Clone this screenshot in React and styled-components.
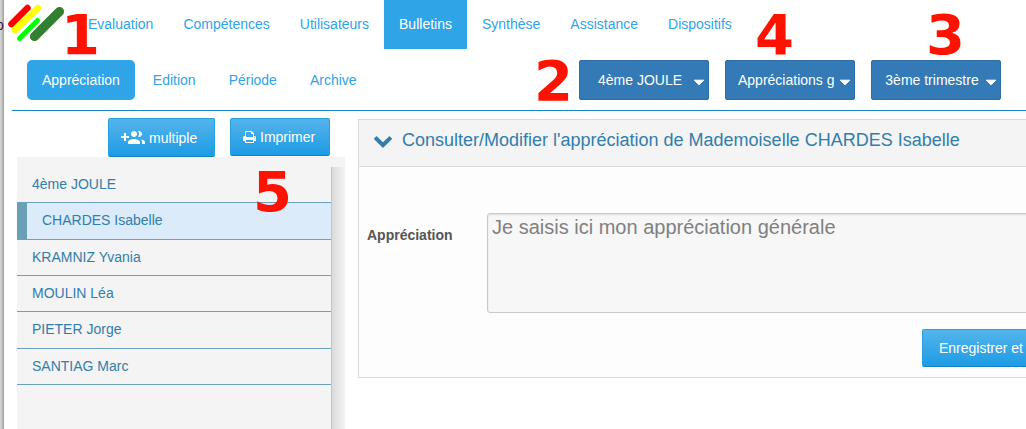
import React from "react";
import styled, { createGlobalStyle } from "styled-components";

const GlobalStyle = createGlobalStyle`
  *, *::before, *::after { box-sizing: border-box; }
  html { height: 100%; }
  body {
    height: 100%;
    margin: 0;
    overflow: hidden;
    background: #fff;
    color: #555;
    font: 14px/20px "Liberation Sans", Arial, sans-serif;
  }
  #root { height: 100%; }
  ul { list-style: none; margin: 0; padding: 0; }
  a { text-decoration: none; }
  button, select, textarea { font: inherit; }
`;

const Shell = styled.div`
  position: relative;
  display: flex;
  min-height: 100%;
  overflow: hidden;
`;

const WindowEdge = styled.div`
  flex: 0 0 4px;
  padding-top: 15px;
  overflow: hidden;
  color: #402030;
  text-indent: -4px;
  background: linear-gradient(to right, #d6d6d6, #c4c4c4 50%, #999);
`;

const Page = styled.div`
  flex: 1;
  min-width: 0;
  display: flex;
  flex-direction: column;
`;

const MainNav = styled.nav`
  display: flex;
  height: 49px;
  padding-left: 4px;
`;

const Logo = styled.svg`
  flex: none;
  width: 65px;
  height: 49px;
  stroke-linecap: round;
`;

const NavLink = styled.a`
  display: flex;
  align-items: center;
  padding: 0 15px;
  white-space: nowrap;
  color: ${(p) => (p.$active ? "#fff" : "#2fa4e7")};
  background: ${(p) => (p.$active ? "#2fa4e7" : "transparent")};
`;

const MainLink = styled(NavLink)`
  padding-bottom: 2px;
`;

const SubBar = styled.div`
  display: flex;
  justify-content: space-between;
  margin: 11px 0 8px 8px;
  padding: 0 25px 10px 15px;
  border-bottom: 1px solid #1d86c8;
`;

const SubNav = styled.nav`
  display: flex;
  gap: 3px;
  height: 40px;
`;

const SubLink = styled(NavLink)`
  border-radius: 5px;
`;

const Filters = styled.div`
  display: flex;
  gap: 16px;
`;

const FilterBox = styled.label`
  display: grid;
  align-items: center;
  width: 130px;
  height: 40px;

  > * { grid-area: 1 / 1; }
`;

const FilterSelect = styled.select`
  width: 100%;
  height: 100%;
  padding: 0 20px 0 12px;
  appearance: none;
  border: 1px solid #2e6da4;
  border-radius: 2px;
  background: #337ab7;
  color: #fff;
  text-align: center;
`;

const Caret = styled.svg`
  justify-self: end;
  width: 12px;
  height: 7px;
  margin: 4px 4px 0 0;
  fill: #fff;
  stroke: #fff;
  stroke-linejoin: round;
  pointer-events: none;
`;

const Columns = styled.div`
  flex: 1;
  display: flex;
  gap: 13px;
  padding-left: 13px;
`;

const Sidebar = styled.aside`
  flex: 0 0 328px;
  display: flex;
  flex-direction: column;
`;

const Actions = styled.div`
  display: flex;
  justify-content: flex-end;
  align-items: flex-start;
  gap: 15px;
  padding: 0 15px 0 0;
  margin-top: -1px;
`;

const Button = styled.button`
  display: flex;
  align-items: center;
  gap: 4px;
  height: ${(p) => (p.$tall ? 39 : 38)}px;
  min-width: ${(p) => (p.$tall ? 107 : 100)}px;
  padding: 0 ${(p) => (p.$wide ? 16 : 12)}px;
  border: 1px solid #2a9fe0;
  border-bottom-color: #1681c0;
  border-radius: 2px;
  background: linear-gradient(to bottom, #54b4eb, #1d9ce5);
  color: #fff;
  white-space: nowrap;
`;

const GroupIcon = styled.svg`
  width: 24px;
  height: 24px;
  fill: #fff;
`;

const PrintIcon = styled.svg`
  width: 13px;
  height: 12px;
  fill: #fff;
`;

const ListPane = styled.div`
  flex: 1;
  display: flex;
  padding-top: 10px;
  background: #f4f4f4;
`;

const List = styled.ul`
  flex: 1;
  display: grid;
  grid-auto-rows: 1fr;
  align-self: flex-start;
  min-height: 218px;
`;

const ListItem = styled.li`
  display: grid;
  border-bottom: 1px solid #6aa3bb;
`;

const ListLink = styled.a`
  display: flex;
  align-items: center;
  padding: 0 15px 1px;
  color: #317eac;
  border-left: ${(p) => (p.$selected ? "10px solid #6aa0b6" : "0")};
  background: ${(p) => (p.$selected ? "#dcebf9" : "transparent")};
`;

const ScrollShade = styled.div`
  width: 14px;
  border-left: 1px solid #c4c4c4;
  background: linear-gradient(to right, #dadada, #f4f4f4);
`;

const Panel = styled.section`
  flex: 1;
  align-self: flex-start;
  min-width: 0;
  margin-right: -80px;
  border: 1px solid #dadada;
  background: #fdfdfd;
`;

const PanelHeader = styled.header`
  display: flex;
  align-items: center;
  gap: 10px;
  padding: 10px 15px 16px;
  border-bottom: 1px solid #dadada;
  background: #f4f4f4;
`;

const Chevron = styled.svg`
  width: 18px;
  height: 12px;
  margin-top: 4px;
  fill: #317eac;
`;

const PanelTitle = styled.h2`
  margin: 0;
  font-size: 18px;
  line-height: 20px;
  font-weight: 400;
  white-space: nowrap;
  color: #317eac;
`;

const Form = styled.form`
  padding: 46px 0 10px 8px;
`;

const Field = styled.div`
  display: flex;
`;

const FieldLabel = styled.label`
  flex: 0 0 120px;
  padding-top: 12px;
  font-weight: 700;
`;

const TextArea = styled.textarea`
  flex: 1;
  height: 100px;
  padding: 1px 4px;
  resize: none;
  border: 1px solid #c8c8c8;
  border-radius: 3px;
  background: #f7f7f7;
  box-shadow: inset 0 1px 2px #ddd;
  color: #808080;
  font-size: 20px;
  line-height: 24px;
`;

const FormActions = styled.div`
  display: flex;
  justify-content: flex-end;
  padding: 16px 65px 0 0;
`;

const Marker = styled.span`
  position: absolute;
  top: ${(p) => p.$top}px;
  left: ${(p) => p.$left}px;
  right: ${(p) => p.$right}px;
  color: #ff1200;
  font: 700 56px/56px "DejaVu Sans", sans-serif;
  pointer-events: none;
`;

const sections = ["Evaluation", "Compétences", "Utilisateurs", "Bulletins", "Synthèse", "Assistance", "Dispositifs"];
const tabs = ["Appréciation", "Edition", "Période", "Archive"];
const filters = [
  { label: "Classe", value: "4ème JOULE" },
  { label: "Type", value: "Appréciations générales" },
  { label: "Période", value: "3ème trimestre" },
];
const pupils = ["4ème JOULE", "CHARDES Isabelle", "KRAMNIZ Yvania", "MOULIN Léa", "PIETER Jorge", "SANTIAG Marc"];

export default function App() {
  return (
    <Shell>
      <GlobalStyle />
      <WindowEdge>p</WindowEdge>
      <Page>
        <MainNav>
          <Logo viewBox="8 0 65 49" aria-hidden="true">
            <path d="M27.500 8L11.500 24" stroke="#f00" strokeWidth="6.600" />
            <path d="M38 8.200L15 30" stroke="#ff0" strokeWidth="6.600" />
            <path d="M37.500 20.500L19.500 38.500" stroke="#0f0" strokeWidth="5" />
            <path d="M59.500 11.500L34.500 36.500" stroke="#338033" strokeWidth="9.200" />
          </Logo>
          {sections.map((name) => (
            <MainLink key={name} href="#" $active={name === "Bulletins"}>{name}</MainLink>
          ))}
        </MainNav>

        <SubBar>
          <SubNav>
            {tabs.map((name) => (
              <SubLink key={name} href="#" $active={name === "Appréciation"}>{name}</SubLink>
            ))}
          </SubNav>
          <Filters>
            {filters.map(({ label, value }) => (
              <FilterBox key={label}>
                <FilterSelect aria-label={label} defaultValue={value}>
                  <option>{value}</option>
                </FilterSelect>
                <Caret viewBox="0 0 12 7" aria-hidden="true">
                  <path d="M1.200 1.200H10.800L6 5.800Z" />
                </Caret>
              </FilterBox>
            ))}
          </Filters>
        </SubBar>

        <Columns>
          <Sidebar>
            <Actions>
              <Button type="button" $tall>
                <GroupIcon viewBox="0 0 24 24" aria-hidden="true">
                  <path d="M8 10H5V7H3v3H0v2h3v3h2v-3h3v-2zm10 1c1.660 0 2.990-1.340 2.990-3S19.660 5 18 5c-.320 0-.630.050-.910.140.570.810.900 1.790.900 2.860 0 1.070-.340 2.040-.900 2.860.280.090.590.140.910.140zm-5 0c1.660 0 2.990-1.340 2.990-3S14.660 5 13 5c-1.660 0-3 1.340-3 3s1.340 3 3 3zm6.620 2.160c.830.730 1.380 1.660 1.380 2.840v2h3v-2c0-1.540-2.370-2.490-4.380-2.840zM13 13c-2 0-6 1-6 3v2h12v-2c0-2-4-3-6-3z" />
                </GroupIcon>
                multiple
              </Button>
              <Button type="button">
                <PrintIcon viewBox="64 128 1664 1536" aria-hidden="true">
                  <path d="M448 1536h896v-256h-896v256zm0-640h896v-384h-160q-40 0-68-28t-28-68v-160h-640v640zm1152 64q0-26-19-45t-45-19-45 19-19 45 19 45 45 19 45-19 19-45zm128 0v416q0 13-9.500 22.500t-22.500 9.500h-224v160q0 40-28 68t-68 28h-960q-40 0-68-28t-28-68v-160h-224q-13 0-22.500-9.500t-9.500-22.500v-416q0-79 56.500-135.500t135.500-56.500h64v-544q0-40 28-68t68-28h672q40 0 88 20t76 48l152 152q28 28 48 76t20 88v256h64q79 0 135.500 56.500t56.500 135.500z" />
                </PrintIcon>
                Imprimer
              </Button>
            </Actions>
            <ListPane>
              <List>
                {pupils.map((name) => (
                  <ListItem key={name}>
                    <ListLink href="#" $selected={name === "CHARDES Isabelle"}>{name}</ListLink>
                  </ListItem>
                ))}
              </List>
              <ScrollShade />
            </ListPane>
          </Sidebar>

          <Panel>
            <PanelHeader>
              <Chevron viewBox="90 533 1612 1035" aria-hidden="true">
                <path d="M1683 808l-742 741q-19 19-45 19t-45-19l-742-741q-19-19-19-45.500t19-45.500l166-165q19-19 45-19t45 19l531 531 531-531q19-19 45-19t45 19l166 165q19 19 19 45.500t-19 45.500z" />
              </Chevron>
              <PanelTitle>Consulter/Modifier l'appréciation de Mademoiselle CHARDES Isabelle</PanelTitle>
            </PanelHeader>
            <Form>
              <Field>
                <FieldLabel htmlFor="comment">Appréciation</FieldLabel>
                <TextArea id="comment" defaultValue="Je saisis ici mon appréciation générale" />
              </Field>
              <FormActions>
                <Button type="button" $wide>Enregistrer et</Button>
              </FormActions>
            </Form>
          </Panel>
        </Columns>
      </Page>

      <Marker $top={7} $left={61}>1</Marker>
      <Marker $top={53} $right={453}>2</Marker>
      <Marker $top={7} $right={61}>3</Marker>
      <Marker $top={7} $right={232}>4</Marker>
      <Marker $top={164} $left={253}>5</Marker>
    </Shell>
  );
}
